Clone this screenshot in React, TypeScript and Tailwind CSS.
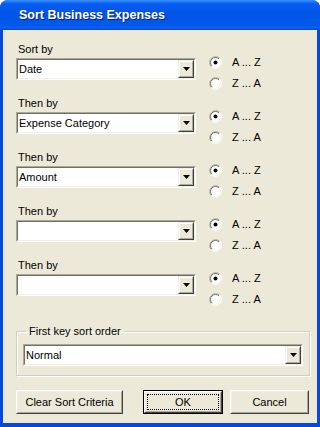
import React from "react";

const font = "font-['Liberation_Sans',Arial,sans-serif]";

function DropArrow() {
  return (
    <div className="flex h-full w-[16px] border border-t-[#f1efe2] border-l-[#f1efe2] border-r-[#404040] border-b-[#404040]">
      <div className="flex flex-1 items-center justify-center border border-t-white border-l-white border-r-[#aca899] border-b-[#aca899] bg-[#ece9d8]">
        <svg width="7" height="4" viewBox="0 0 7 4">
          <path d="M0 0h7L3.5 4z" fill="#000" />
        </svg>
      </div>
    </div>
  );
}

function Combo({ value, className }: { value: string; className: string }) {
  return (
    <div className={`flex h-[22px] border border-t-[#aca899] border-l-[#aca899] border-r-white border-b-white ${className}`}>
      <div className="flex flex-1 items-stretch border border-t-[#716f64] border-l-[#716f64] border-r-[#f1efe2] border-b-[#f1efe2] bg-white">
        <span className="flex flex-1 items-center pl-[1px] text-[11px] leading-none text-black">{value}</span>
        <DropArrow />
      </div>
    </div>
  );
}

function Radio({ checked, label }: { checked: boolean; label: string }) {
  return (
    <div className="flex h-[21px] items-center gap-[10px]">
      <svg width="13" height="13" viewBox="0 0 13 13">
        <circle cx="6.5" cy="6.5" r="6" fill="#fff" />
        <path d="M2.26 10.74A6 6 0 0 1 10.74 2.26" fill="none" stroke="#aca899" />
        <path d="M10.74 2.26A6 6 0 0 1 2.26 10.74" fill="none" stroke="#fff" />
        <path d="M2.96 10.04A5 5 0 0 1 10.04 2.96" fill="none" stroke="#716f64" />
        <path d="M10.04 2.96A5 5 0 0 1 2.96 10.04" fill="none" stroke="#f1efe2" />
        {checked && <circle cx="6.5" cy="6.5" r="2" fill="#000" />}
      </svg>
      <span className="text-[11px] text-black">{label}</span>
    </div>
  );
}

function SortBlock({ label, value }: { label: string; value: string }) {
  return (
    <div className="flex h-[54px] items-start">
      <div className="flex w-[180px] flex-col">
        <span className="h-[14px] pl-[2px] text-[11px] leading-[14px] text-black">{label}</span>
        <Combo value={value} className="mt-[2px] w-[180px]" />
      </div>
      <div className="ml-[13px] mt-[10px] flex flex-col">
        <Radio checked label="A ... Z" />
        <Radio checked={false} label="Z ... A" />
      </div>
    </div>
  );
}

function Button({ label, isDefault, className }: { label: string; isDefault?: boolean; className: string }) {
  if (isDefault) {
    return (
      <div className={`flex h-[24px] border border-black ${className}`}>
        <div className="flex flex-1 border border-t-white border-l-white border-r-[#404040] border-b-[#404040]">
          <div className="flex flex-1 border border-t-[#f1efe2] border-l-[#f1efe2] border-r-[#aca899] border-b-[#aca899] bg-[#ece9d8] p-[1px]">
            <div className="flex flex-1 items-center justify-center border border-dotted border-black text-[11px] text-black">{label}</div>
          </div>
        </div>
      </div>
    );
  }
  return (
    <div className={`flex h-[24px] border border-t-white border-l-white border-r-[#404040] border-b-[#404040] ${className}`}>
      <div className="flex flex-1 items-center justify-center border border-t-[#f1efe2] border-l-[#f1efe2] border-r-[#aca899] border-b-[#aca899] bg-[#ece9d8] text-[11px] text-black">
        {label}
      </div>
    </div>
  );
}

export default function App() {
  const rows = [
    { label: "Sort by", value: "Date" },
    { label: "Then by", value: "Expense Category" },
    { label: "Then by", value: "Amount" },
    { label: "Then by", value: "" },
    { label: "Then by", value: "" },
  ];

  return (
    <div className={`flex h-[427px] w-[320px] flex-col overflow-hidden rounded-t-[8px] bg-[#0648dc] ${font}`}>
      <div className="flex h-[30px] shrink-0 items-center bg-[linear-gradient(#3c95ff,#0a5df2_12%,#0054e6_45%,#0259ec_85%,#0b61f0_92%,#0845d8)] pl-[19px]">
        <span className="text-[12.5px] font-bold text-white [text-shadow:1px_1px_#0a1f7a]">Sort Business Expenses</span>
      </div>
      <div className="mx-[3px] mb-[4px] flex flex-1 flex-col bg-[#ece9d8] pl-[13px] pt-[12px]">
        {rows.map((r, i) => (
          <SortBlock key={i} label={r.label} value={r.value} />
        ))}
        <fieldset className="mt-[12px] w-[294px] border border-[#d0d0bf] pb-[9px] shadow-[inset_1px_1px_0_#fff,1px_1px_0_#fff]">
          <legend className="ml-[9px] px-[3px] text-[11px] leading-[14px] text-black">First key sort order</legend>
          <Combo value="Normal" className="ml-[6px] mt-[6px] w-[280px]" />
        </fieldset>
        <div className="mt-[14px] flex items-start">
          <Button label="Clear Sort Criteria" className="w-[107px]" />
          <Button label="OK" isDefault className="ml-[20px] w-[80px]" />
          <Button label="Cancel" className="ml-[7px] w-[79px]" />
        </div>
      </div>
    </div>
  );
}
